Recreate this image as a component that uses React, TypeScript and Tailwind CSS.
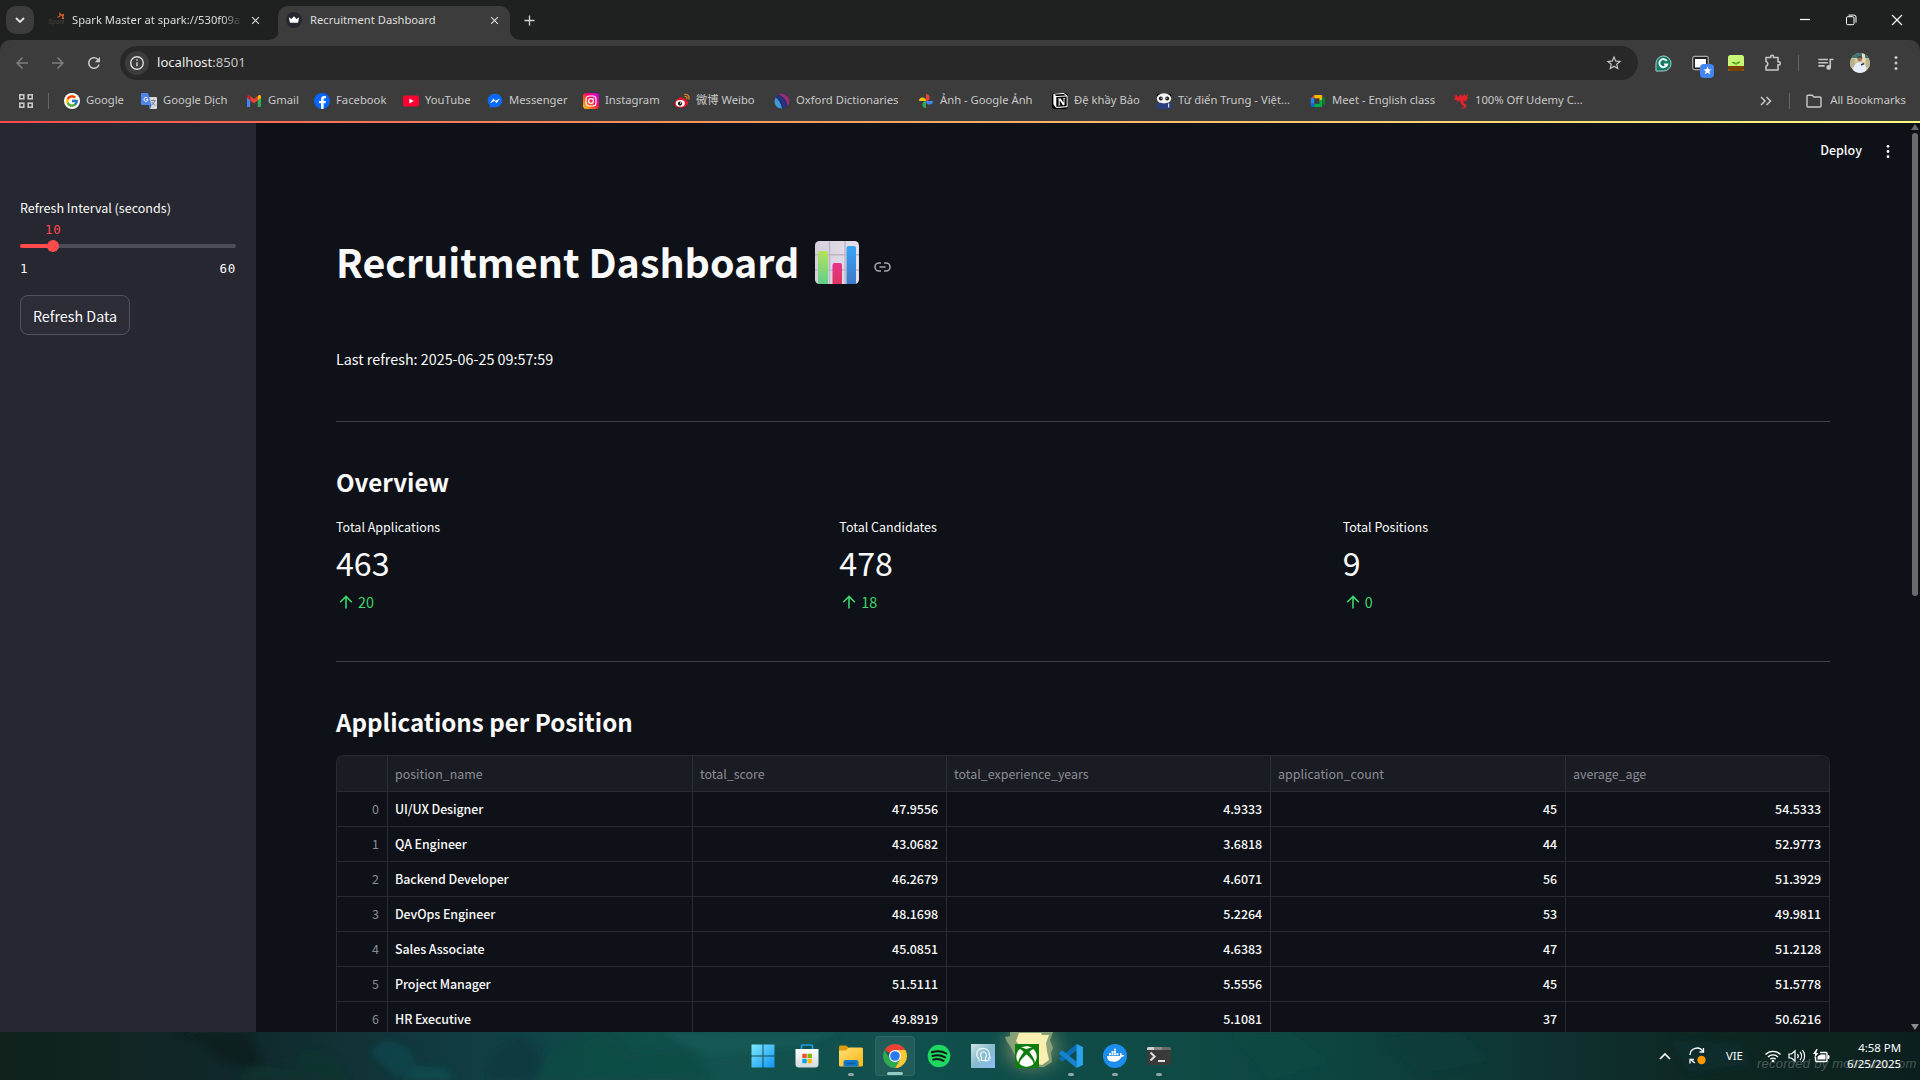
import type { ReactNode } from "react";
import { FcGoogle } from "react-icons/fc";
import { FaXbox, FaFacebookF } from "react-icons/fa";
import { RiNotionFill } from "react-icons/ri";
import { MdArrowBack, MdArrowForward, MdRefresh, MdStarBorder, MdQueueMusic, MdClose } from "react-icons/md";

/* ---------- small brand icons ---------- */

const Translate = () => (
  <svg viewBox="0 0 16 16" className="size-4">
    <path d="M6 4h9a1 1 0 0 1 1 1v10a1 1 0 0 1-1 1H9z" fill="#d5d7da" />
    <path d="M0 1a1 1 0 0 1 1-1h6l3.6 12H1a1 1 0 0 1-1-1z" fill="#4f86ec" />
    <path d="M7.500 12h3.100L9 16z" fill="#3367d6" />
    <path d="M6.600 5.200A2 2 0 1 0 7 6.600H5.200" fill="none" stroke="#fff" strokeWidth="1" />
    <path d="M10 7.500h4.600M12.300 6.500v1M13.700 7.600c-.3 2-1.400 3.300-2.900 4.300M11 9c.5 1.300 1.700 2.500 3.300 3.300" fill="none" stroke="#6b7077" strokeWidth=".8" />
  </svg>
);

const Gmail = () => (
  <svg viewBox="0 0 16 16" className="size-4">
    <path d="M1 13.500V4.200l3.200 2.400v7.400H1.500a.5.5 0 0 1-.5-.5z" fill="#4285f4" />
    <path d="M11.800 14V6.600L15 4.200v9.300a.5.5 0 0 1-.5.5z" fill="#34a853" />
    <path d="M4.200 7.400V3L8 5.900 11.800 3v4.400L8 10.300z" fill="#ea4335" />
    <path d="M11.800 3l.8-.6c1-.7 2.400 0 2.400 1.200v1.200l-3.200 2.500z" fill="#fbbc04" />
    <path d="M4.200 3l-.8-.6C2.400 1.700 1 2.400 1 3.600v1.200l3.200 2.500z" fill="#c5221f" />
  </svg>
);

const Facebook = () => (
  <span className="flex size-4 items-end justify-center overflow-hidden rounded-full bg-[#0866ff]">
    <FaFacebookF className="size-[13px] text-white" />
  </span>
);

const YouTube = () => (
  <svg viewBox="0 0 16 16" className="size-4">
    <rect x="0" y="2.500" width="16" height="11" rx="2.600" fill="#ff0033" />
    <path d="M6.400 5.600v4.800L10.600 8z" fill="#fff" />
  </svg>
);

const Messenger = () => (
  <svg viewBox="0 0 16 16" className="size-4">
    <path d="M8 .8C3.900.8.8 3.700.8 7.600c0 2.100.9 3.900 2.300 5.100V15l2.200-1.100c.9.200 1.700.4 2.700.4 4.100 0 7.200-2.900 7.200-6.700S12.100.8 8 .8z" fill="#0a6cff" />
    <path d="M3.700 9.700L6.300 6l2.400 2 3.500-1.900L9.700 9.700l-2.400-2z" fill="#fff" stroke="#fff" strokeWidth=".5" />
  </svg>
);

const Instagram = () => (
  <svg viewBox="0 0 16 16" className="size-4">
    <defs>
      <linearGradient id="ig" x1="0" y1="1" x2="1" y2="0">
        <stop offset="0" stopColor="#ffd521" />
        <stop offset=".35" stopColor="#ff5a1f" />
        <stop offset=".6" stopColor="#ff0069" />
        <stop offset="1" stopColor="#b900ff" />
      </linearGradient>
    </defs>
    <rect width="16" height="16" rx="3.500" fill="url(#ig)" />
    <rect x="3" y="3" width="10" height="10" rx="3" fill="none" stroke="#fff" strokeWidth="1.200" />
    <circle cx="8" cy="8" r="2.400" fill="none" stroke="#fff" strokeWidth="1.200" />
    <circle cx="10.900" cy="5.100" r=".7" fill="#fff" />
  </svg>
);

const Weibo = () => (
  <svg viewBox="0 0 16 16" className="size-4">
    <path d="M6.500 4.200c1.300-.5 2.200.1 1.900 1.500 2-.8 3.600-.3 3.100 1.400 3.500 1 3.300 4.200.3 6.100-3.300 2.100-9 2.200-11-.9C-.6 9.800 3 5.400 6.500 4.200z" fill="#e6162d" />
    <ellipse cx="6.300" cy="10.400" rx="4.500" ry="3.300" fill="#fff" />
    <circle cx="6" cy="10.600" r="2.100" fill="#111" />
    <circle cx="6.600" cy="10" r=".7" fill="#fff" />
    <path d="M10.800 1.300c2.700-.4 4.900 1.900 4.100 4.900M11 3.500c1.400-.2 2.300.8 1.900 2.200" fill="none" stroke="#e88a1c" strokeWidth="1.200" strokeLinecap="round" />
  </svg>
);

const Oxford = () => (
  <svg viewBox="0 0 16 16" className="size-4">
    <circle cx="8" cy="8" r="7.500" fill="#1f2f70" />
    <path d="M4 1.600C9-1 15.500 3 15.500 8c0 2-1 4-2.200 5C13 8 10 3.500 4 1.600z" fill="#9a2c72" />
    <path d="M1.500 4.500C4 6 7 10 8 15.500 3 15.500.5 12 .5 8z" fill="#3f9ad6" />
    <path d="M2.300 3.400C6.500 6 9 10.500 9.500 15.300l2.500-1.100C11.500 9 8 4 4 1.700z" fill="#2b3480" />
  </svg>
);

const Photos = () => (
  <svg viewBox="0 0 16 16" className="size-4">
    <path d="M8 8H1a3.500 3.500 0 0 1 7 0z" fill="#fbbc04" />
    <path d="M8 8V1a3.500 3.500 0 0 1 0 7z" fill="#ea4335" />
    <path d="M8 8h7a3.500 3.500 0 0 1-7 0z" fill="#4285f4" />
    <path d="M8 8v7a3.500 3.500 0 0 1 0-7z" fill="#34a853" />
  </svg>
);

const Notion = () => (
  <span className="flex size-4 items-center justify-center rounded-[3px] bg-black">
    <RiNotionFill className="size-[19px] shrink-0 text-white" />
  </span>
);

const Panda = () => (
  <svg viewBox="0 0 16 16" className="size-4">
    <circle cx="2.600" cy="2.400" r="2" fill="#111" />
    <circle cx="13.400" cy="2.400" r="2" fill="#111" />
    <ellipse cx="8" cy="5.500" rx="7.200" ry="5.200" fill="#f3f3f3" />
    <ellipse cx="4.800" cy="5.500" rx="1.900" ry="2.100" fill="#111" />
    <ellipse cx="11.200" cy="5.500" rx="1.900" ry="2.100" fill="#111" />
    <circle cx="5.200" cy="5.200" r=".6" fill="#fff" />
    <circle cx="10.800" cy="5.200" r=".6" fill="#fff" />
    <path d="M.5 10.500c2-1 4-.8 7.500.3 3.500-1.100 5.500-1.300 7.500-.3V16H.5z" fill="#27407c" />
    <path d="M12.600 10.500v4" stroke="#cdd6ee" strokeWidth="1.200" />
  </svg>
);

const Meet = () => (
  <svg viewBox="0 0 16 16" className="size-4">
    <path d="M.8 5.200L4.300 2v3.300z" fill="#ea4335" />
    <path d="M4.300 2h6.900a1 1 0 0 1 1 1v3.500L9.500 8V5.300H4.300z" fill="#ffba00" />
    <path d="M.8 5.200h3.500v5.500H.8z" fill="#2684fc" />
    <path d="M.8 10.700h3.500V14H2a1.200 1.200 0 0 1-1.200-1.200z" fill="#0066da" />
    <path d="M4.300 10.700h5.200V8l2.700-1.500V13a1 1 0 0 1-1 1H4.300z" fill="#00ac47" />
    <path d="M12.200 5.800L15 3.500v9l-2.800-2.300z" fill="#00832d" />
  </svg>
);

const Dragon = () => (
  <svg viewBox="0 0 16 16" className="size-4">
    <path d="M.3 1.500L3 4l-.5-3 3 3.200L8 1l1 2.500L12.500.4l-.8 2.800L15.500 1l-1.700 3.500 1.900.5-2.500 1.500.6 2-3-.9c-1 1.500-.3 2.400 1.200 3.100 2 1 1.700 3.500-.7 4.600-1.700.7-3.500.5-4-.5 1.800.4 3.700-.3 3.600-1.500-.1-1-2.400-1-3.200-2.800-.6-1.400.3-2.300-.6-3L4 8.800l.2-2L1 7l1.500-1.700z" fill="#e8202a" />
  </svg>
);

const bookmarks: { label: string; icon: ReactNode; width: string }[] = [
  { label: "Google", icon: <FcGoogle className="size-4 rounded-full bg-white p-px" />, width: "w-[77px]" },
  { label: "Google Dịch", icon: <Translate />, width: "w-[105px]" },
  { label: "Gmail", icon: <Gmail />, width: "w-[68px]" },
  { label: "Facebook", icon: <Facebook />, width: "w-[89px]" },
  { label: "YouTube", icon: <YouTube />, width: "w-[84px]" },
  { label: "Messenger", icon: <Messenger />, width: "w-[96px]" },
  { label: "Instagram", icon: <Instagram />, width: "w-[91px]" },
  { label: "微博 Weibo", icon: <Weibo />, width: "w-[100px]" },
  { label: "Oxford Dictionaries", icon: <Oxford />, width: "w-[144px]" },
  { label: "Ảnh - Google Ảnh", icon: <Photos />, width: "w-[134px]" },
  { label: "Đệ khầy Bảo", icon: <Notion />, width: "w-[104px]" },
  { label: "Từ điển Trung - Việt...", icon: <Panda />, width: "w-[154px]" },
  { label: "Meet - English class", icon: <Meet />, width: "w-[143px]" },
  { label: "100% Off Udemy C...", icon: <Dragon />, width: "w-[140px]" },
];

/* ---------- browser chrome ---------- */

const Dots = ({ className }: { className: string }) => (
  <svg viewBox="0 0 4 16" className={className} fill="currentColor">
    <circle cx="2" cy="2.500" r="1.500" />
    <circle cx="2" cy="8" r="1.500" />
    <circle cx="2" cy="13.500" r="1.500" />
  </svg>
);

function TabStrip() {
  return (
    <div className="flex h-10 items-end bg-[#1f2120] text-[11.200px] text-[#dededc]">
      <div className="mb-1.5 ml-1.5 flex size-7 items-center justify-center rounded-[10px] bg-[#3c3c3c]">
        <svg viewBox="0 0 10 6" className="h-1.5 w-2.5" fill="none" stroke="#e3e3e3" strokeWidth="1.800"><path d="M1 1l4 4 4-4" /></svg>
      </div>
      <div className="ml-[14px] flex h-[34px] w-[221px] items-center pb-[6px]">
        <svg viewBox="0 0 16 16" className="size-4">
          <text x="0" y="12" fontSize="6.500" fontStyle="italic" fill="#45403d" fontFamily="Liberation Sans">Spark</text>
          <path d="M9.500 5.200l2.300-1L12 1.500l1.500 1.800 2.200-.8-1 2.100 1 2-2.200-.6" fill="none" stroke="#d9662a" strokeWidth="1.200" />
        </svg>
        <span className="ml-2 w-[170px] overflow-hidden whitespace-nowrap [mask-image:linear-gradient(to_right,black_88%,transparent)]">Spark Master at spark://530f09a</span>
        <MdClose className="ml-[7px] size-[13px]" />
      </div>
      <div className="size-2.5 overflow-hidden bg-[#3c3c3c]"><div className="size-full rounded-br-[10px] bg-[#1f2120]" /></div>
      <div className="-ml-px flex h-[34px] w-[232px] items-center rounded-t-[10px] bg-[#3c3c3c] pb-[6px] pl-2">
        <svg viewBox="0 0 16 16" className="size-4">
          <circle cx="8" cy="8" r="8" fill="#262730" />
          <path d="M2.800 5.200l2.700 1.700L8 4.200l2.500 2.700 2.700-1.700-1.200 5.500H4z" fill="#fff" />
        </svg>
        <span className="ml-2 w-[177px] whitespace-nowrap">Recruitment Dashboard</span>
        <MdClose className="ml-[1px] size-[13px]" />
      </div>
      <div className="size-2.5 overflow-hidden bg-[#3c3c3c]"><div className="size-full rounded-bl-[10px] bg-[#1f2120]" /></div>
      <svg viewBox="0 0 12 12" className="mb-[14px] ml-[4px] size-[11px]" stroke="#cfcfcf" strokeWidth="1.500"><path d="M6 .5v11M.5 6h11" /></svg>
      <div className="mr-[17px] mb-[14px] ml-auto flex items-center text-white">
        <svg viewBox="0 0 12 12" className="mr-[34px] size-3" stroke="currentColor" strokeWidth="1.200"><path d="M1 5.500h10" /></svg>
        <svg viewBox="0 0 12 12" className="mr-[34px] size-3" stroke="currentColor" fill="none"><rect x="1.500" y="2.700" width="7.500" height="8" rx="1.200" /><path d="M3.500 1.100h5.500a2 2 0 0 1 2 2v5.500" /></svg>
        <svg viewBox="0 0 12 12" className="size-3" stroke="currentColor" strokeWidth="1.100"><path d="M1 1l10 10M11 1L1 11" /></svg>
      </div>
    </div>
  );
}

function Toolbar() {
  return (
    <div className="bg-[#1f2120]">
      <div className="flex h-[46px] items-center rounded-t-[10px] bg-[#3c3c3c] pl-[13px] text-[#c7c7c7]">
        <MdArrowBack className="size-[18px] text-[#7e7e7e]" />
        <MdArrowForward className="ml-[18px] size-[18px] text-[#7e7e7e]" />
        <MdRefresh className="ml-[18px] size-[18px]" />
        <div className="ml-[17px] flex h-[34px] w-[1518px] items-center rounded-full bg-[#282828] pl-[5px]">
          <span className="flex size-6 items-center justify-center rounded-full bg-[#3c3c3c]">
            <svg viewBox="0 0 16 16" className="size-4" fill="none" stroke="#dcdcdc" strokeWidth="1.400"><circle cx="8" cy="8" r="6.300" /><path d="M8 7.200v4M8 4.300v1.500" /></svg>
          </span>
          <span className="ml-2 text-[13.100px] text-[#c3c3c3]"><span className="text-[#ececec]">localhost</span>:8501</span>
          <MdStarBorder className="mr-[15px] ml-auto size-[18px]" />
        </div>
        <svg viewBox="0 0 18 18" className="ml-[17px] size-[17px]">
          <path d="M9 1a8 8 0 1 1 0 16H1V9a8 8 0 0 1 8-8z" fill="#0f7c68" stroke="#b9d3cd" />
          <path d="M12.500 6.200A4.300 4.300 0 1 0 13 10H9.600" fill="none" stroke="#fff" strokeWidth="2" />
        </svg>
        <div className="relative ml-5 size-[17px]">
          <svg viewBox="0 0 17 17" className="size-full"><rect x=".7" y="1.300" width="15.600" height="13.400" rx="2" fill="#222" stroke="#a8a8a8" strokeWidth="1.200" /><rect x="3" y="4" width="11" height="8.500" fill="#fff" /></svg>
          <span className="absolute top-[9px] left-[8px] flex size-[14px] items-center justify-center rounded-[4px] bg-[#4285f4]">
            <svg viewBox="0 0 10 10" className="size-[9px]" fill="#fff"><path d="M5 .5l1.300 3 3.200.3-2.400 2.100.7 3.200L5 7.400 2.200 9.100l.7-3.200L.5 3.800l3.200-.3z" /></svg>
          </span>
        </div>
        <svg viewBox="0 0 16 16" className="ml-[19px] size-4">
          <rect width="16" height="16" rx="2.500" fill="#c9f776" />
          <path d="M0 11h16v2.500a2.500 2.500 0 0 1-2.500 2.500h-11A2.500 2.500 0 0 1 0 13.500z" fill="#7b4208" />
          <path d="M8 11V8.800C6.500 9.200 4.800 8.800 4 7c2 0 3.300.3 4 1.500C8.700 7 10.200 6.600 12 6.700 11.500 8.500 10 9 8.300 8.800" fill="#58a713" stroke="#4f9c12" strokeWidth=".4" />
        </svg>
        <svg viewBox="0 0 18 18" className="ml-5 size-[18px]" fill="none" stroke="currentColor" strokeWidth="1.600" strokeLinejoin="round">
          <path d="M2 3.500h4.700V2.600a1.400 1.400 0 0 1 2.800 0v.9H14v4.400h.8a1.500 1.500 0 0 1 0 3H14V16H2v-3.800a2.500 2.500 0 0 0 0-4.800z" />
        </svg>
        <span className="ml-4 h-4 w-px bg-[#666]" />
        <MdQueueMusic className="ml-[17px] size-[19px]" />
        <svg viewBox="0 0 20 20" className="ml-[15px] size-5">
          <defs><clipPath id="av"><circle cx="10" cy="10" r="10" /></clipPath></defs>
          <g clipPath="url(#av)">
            <rect width="20" height="20" fill="#d9c9a0" />
            <path d="M0 0h20v5H0z" fill="#3f7474" />
            <path d="M12 0h3v9h-3z" fill="#e6dcc0" />
            <path d="M0 6h5v8H0zM16 5h4v9h-4z" fill="#b9b28f" />
            <path d="M4 20c-2-6 1-10.500 6-10.500s7 4.500 6 10.500z" fill="#e9eefc" />
            <circle cx="9.800" cy="6" r="2.400" fill="#9a7660" />
            <path d="M7.300 5.500c0-3.500 5-3.500 5.200 0-1.500-1.500-3.500-1.500-5.200 0z" fill="#4a3b33" />
            <path d="M11 12l3-1.500" stroke="#2f3a3f" strokeWidth="1.500" />
          </g>
        </svg>
        <Dots className="ml-6 h-4 w-1" />
      </div>
      <div className="flex h-[35px] items-center bg-[#3c3c3c] pb-[6px] pl-[19px] text-[11.250px] text-[#c9c9c9]">
        <svg viewBox="0 0 14 14" className="size-[14px]" fill="none" stroke="#c7c7c7" strokeWidth="1.600"><rect x=".8" y=".8" width="4" height="4" /><rect x="9.200" y=".8" width="4" height="4" /><rect x=".8" y="9.200" width="4" height="4" /><rect x="9.200" y="9.200" width="4" height="4" /></svg>
        <span className="mr-[15px] ml-[15px] h-4 w-px bg-[#666]" />
        {bookmarks.map((b) => (
          <span key={b.label} className={`flex shrink-0 items-center gap-1.5 whitespace-nowrap ${b.width}`}>
            <span className="size-4 shrink-0">{b.icon}</span>
            <span>{b.label}</span>
          </span>
        ))}
        <svg viewBox="0 0 12 10" className="ml-auto h-2.5 w-3" fill="none" stroke="currentColor" strokeWidth="1.500"><path d="M1 1l4 4-4 4M6.500 1l4 4-4 4" /></svg>
        <span className="ml-[17px] h-4 w-px bg-[#666]" />
        <svg viewBox="0 0 16 14" className="ml-4 h-[14px] w-4" fill="none" stroke="currentColor" strokeWidth="1.400"><path d="M1 2.500V12a1 1 0 0 0 1 1h12a1 1 0 0 0 1-1V4a1 1 0 0 0-1-1H8L6.200 1.200H2a1 1 0 0 0-1 1z" /></svg>
        <span className="mr-[14px] ml-2 whitespace-nowrap">All Bookmarks</span>
      </div>
      <div className="h-0.5 bg-gradient-to-r from-[#ff4b4b] to-[#fffd80]" />
    </div>
  );
}

/* ---------- dashboard ---------- */

function Sidebar() {
  return (
    <aside className="w-64 shrink-0 bg-[#262730] px-5 pt-[75px] text-[#fafafa]">
      <div className="h-5 text-[12.550px] leading-5 whitespace-nowrap">Refresh Interval (seconds)</div>
      <div className="mt-1 h-4 pl-[25px] font-['DejaVu_Sans_Mono',monospace] text-[12.500px] leading-4 tracking-[0.700px] text-[#ff4b4b]">10</div>
      <div className="relative mt-[6px] h-1 rounded-full bg-[linear-gradient(to_right,#ff4b4b_15.200%,#4c4d57_15.200%)]">
        <span className="absolute top-[-4px] left-[27px] size-3 rounded-full bg-[#ff4b4b]" />
      </div>
      <div className="mt-[13px] flex h-4 justify-between font-['DejaVu_Sans_Mono',monospace] text-[12.500px] leading-4 tracking-[0.700px]"><span>1</span><span>60</span></div>
      <button className="mt-[18px] flex h-10 w-[110px] items-center justify-center rounded-lg border border-[#51525b] bg-[#2b2c36] pt-px text-[14.300px] whitespace-nowrap">Refresh Data</button>
    </aside>
  );
}

const metrics = [
  { label: "Total Applications", value: "463", delta: "20" },
  { label: "Total Candidates", value: "478", delta: "18" },
  { label: "Total Positions", value: "9", delta: "0" },
];

const columns = ["", "position_name", "total_score", "total_experience_years", "application_count", "average_age"];

const rows = [
  ["0", "UI/UX Designer", "47.9556", "4.9333", "45", "54.5333"],
  ["1", "QA Engineer", "43.0682", "3.6818", "44", "52.9773"],
  ["2", "Backend Developer", "46.2679", "4.6071", "56", "51.3929"],
  ["3", "DevOps Engineer", "48.1698", "5.2264", "53", "49.9811"],
  ["4", "Sales Associate", "45.0851", "4.6383", "47", "51.2128"],
  ["5", "Project Manager", "51.5111", "5.5556", "45", "51.5778"],
  ["6", "HR Executive", "49.8919", "5.1081", "37", "50.6216"],
];

const cellStyle = (col: number) =>
  col === 0
    ? "justify-end text-[#8b8d94]"
    : col === 1
      ? "justify-start font-medium tracking-[-0.080px] text-[#fafafa]"
      : "justify-end font-medium tracking-[-0.050px] text-[#fafafa]";

function ChartEmoji() {
  return (
    <svg viewBox="0 0 44 43" className="mt-[3px] ml-[16px] h-[43px] w-[44px]">
      <defs>
        <linearGradient id="g1" x1="0" y1="0" x2="0" y2="1"><stop offset="0" stopColor="#b5e35c" /><stop offset="1" stopColor="#5fcf8b" /></linearGradient>
        <linearGradient id="g2" x1="0" y1="0" x2="0" y2="1"><stop offset="0" stopColor="#e8338c" /><stop offset="1" stopColor="#dd3560" /></linearGradient>
        <linearGradient id="g3" x1="0" y1="0" x2="0" y2="1"><stop offset="0" stopColor="#37a5f5" /><stop offset="1" stopColor="#3f78c9" /></linearGradient>
        <linearGradient id="g4" x1="0" y1="0" x2="1" y2="0"><stop offset="0" stopColor="#d5cfdc" /><stop offset="1" stopColor="#e5e0ea" /></linearGradient>
      </defs>
      <rect width="44" height="43" rx="4.500" fill="url(#g4)" />
      <path d="M14.500 0v43M30 0v43M0 13.700h44M0 29h44" stroke="#bdb6c6" strokeWidth="1.400" />
      <path d="M3 43V12a2 2 0 0 1 2-2h6a2 2 0 0 1 2 2v31z" fill="url(#g1)" />
      <path d="M17.500 43V24a2 2 0 0 1 2-2H25a2 2 0 0 1 2 2v19z" fill="url(#g2)" />
      <path d="M31.500 43V7a2 2 0 0 1 2-2H39a2 2 0 0 1 2 2v36z" fill="url(#g3)" />
    </svg>
  );
}

function Main() {
  return (
    <main className="flex min-w-0 flex-1 bg-[#0e1117] text-[#fafafa]">
      <div className="min-w-0 flex-1">
        <header className="flex h-14 items-center justify-end text-[12.500px] font-medium">
          <span className="-mt-0.5">Deploy</span>
          <Dots className="mr-[19px] ml-6 h-[15px] w-1" />
        </header>
        <div className="ml-20 w-[1494px]">
          <h1 className="mt-[50px] flex h-16 items-center text-[39.400px] leading-none font-bold whitespace-nowrap">
            <span>Recruitment Dashboard</span>
            <ChartEmoji />
            <svg viewBox="0 0 17 10" className="mt-[12px] ml-[15px] h-2.5 w-[17px]" fill="none" stroke="#a3a5aa" strokeWidth="1.600"><path d="M7 1H5a4 4 0 0 0 0 8h2M10 1h2a4 4 0 0 1 0 8h-2M5.500 5h6" /></svg>
          </h1>
          <p className="mt-[54px] h-6 text-[14.330px] leading-6">Last refresh: 2025-06-25 09:57:59</p>
          <hr className="mt-[50px] border-[#3e4045]" />
          <h2 className="mt-[43px] h-[34px] text-[24.150px] leading-[34px] font-bold">Overview</h2>
          <div className="mt-[18px] grid grid-cols-3 gap-4">
            {metrics.map((m) => (
              <div key={m.label}>
                <div className="h-5 text-[12.530px] leading-5">{m.label}</div>
                <div className="mt-0.5 h-[46px] text-[32.200px] leading-[46px]">{m.value}</div>
                <div className="mt-[5px] flex h-6 items-center pl-[3px] text-[14.300px] text-[#3dd56d]">
                  <svg viewBox="0 0 14 14" className="mr-[5px] size-[14px]" fill="none" stroke="currentColor" strokeWidth="1.600"><path d="M7 13.500V1.500M1.200 7.300L7 1.500l5.800 5.800" /></svg>
                  {m.delta}
                </div>
              </div>
            ))}
          </div>
          <hr className="mt-[47px] border-[#3e4045]" />
          <h2 className="mt-[43px] h-[34px] text-[24.150px] leading-[34px] font-bold">Applications per Position</h2>
          <div className="mt-4 overflow-hidden rounded-t-lg border border-b-0 border-[#282b31] text-[12.450px]">
            <div className="grid h-9 grid-cols-[51px_305px_254px_324px_295px_1fr] border-b border-[#282b31] bg-[#1a1c24] text-[#8b8d94]">
              {columns.map((c) => (
                <div key={c} className="flex items-center border-r border-[#2c2f36] pt-px pr-2 pl-[7px] last:border-r-0">{c}</div>
              ))}
            </div>
            {rows.map((r) => (
              <div key={r[0]} className="grid h-[35px] grid-cols-[51px_305px_254px_324px_295px_1fr] border-b border-[#282b31]">
                {r.map((v, c) => (
                  <div key={c} className={`flex items-center border-r border-[#282b31] pr-2 pl-[7px] last:border-r-0 ${cellStyle(c)}`}>{v}</div>
                ))}
              </div>
            ))}
          </div>
        </div>
      </div>
      <div className="flex w-[11px] flex-col items-center pt-[1px] pb-[2px]">
        <svg viewBox="0 0 8 6" className="h-1.5 w-2" fill="#6b6b6b"><path d="M4 0l4 6H0z" /></svg>
        <div className="mt-[3px] h-[463px] w-1.5 rounded-full bg-[#6b6b6b]" />
        <svg viewBox="0 0 8 6" className="mt-auto h-1.5 w-2" fill="#8b8b8b"><path d="M0 0h8L4 6z" /></svg>
      </div>
    </main>
  );
}

/* ---------- taskbar ---------- */

const WindowsLogo = () => (
  <svg viewBox="0 0 24 24" className="size-6">
    <defs><linearGradient id="win" x1="0" y1="0" x2="1" y2="1"><stop offset="0" stopColor="#7fe9ff" /><stop offset="1" stopColor="#1094f5" /></linearGradient></defs>
    <path d="M.5.5H11.500v11H.5zM12.500.5h11v11h-11zM.5 12.500h11v11H.5zM12.500 12.500h11v11h-11z" fill="url(#win)" />
  </svg>
);

const Store = () => (
  <svg viewBox="0 0 24 24" className="size-6">
    <defs><linearGradient id="st" x1="0" y1="0" x2="0" y2="1"><stop offset="0" stopColor="#fff" /><stop offset="1" stopColor="#d3d8da" /></linearGradient></defs>
    <path d="M6.500 5.500V2a1 1 0 0 1 1-1h9a1 1 0 0 1 1 1v3.500" fill="none" stroke="#1b9de2" strokeWidth="1.700" />
    <path d="M.5 5h23v15a3.500 3.500 0 0 1-3.500 3.500H4A3.500 3.500 0 0 1 .5 20z" fill="url(#st)" />
    <path d="M7.300 9.800h4.400v4.300H7.300z" fill="#f25022" /><path d="M12.500 9.800h4.400v4.300h-4.400z" fill="#7fba00" /><path d="M7.300 14.900h4.400v4.300H7.300z" fill="#00a4ef" /><path d="M12.500 14.900h4.400v4.300h-4.400z" fill="#ffb900" />
  </svg>
);

const Explorer = () => (
  <svg viewBox="0 0 24 24" className="size-6">
    <defs><linearGradient id="fo" x1="0" y1="0" x2="1" y2="1"><stop offset="0" stopColor="#ffdf78" /><stop offset="1" stopColor="#fbb812" /></linearGradient></defs>
    <path d="M0 3a1.500 1.500 0 0 1 1.500-1.500h5.800L10 4H22.500A1.500 1.500 0 0 1 24 5.500V9H0z" fill="#d99a0b" />
    <path d="M0 6.500h6.800L10 3.500h12.500A1.500 1.500 0 0 1 24 5v16a1.500 1.500 0 0 1-1.500 1.500h-21A1.500 1.500 0 0 1 0 21z" fill="url(#fo)" />
    <path d="M4.500 22.500V18a2 2 0 0 1 2-2h11a2 2 0 0 1 2 2v4.500z" fill="#1278c8" />
    <path d="M8 19.500h8" stroke="#0b5a9e" strokeWidth="1.500" strokeLinecap="round" />
  </svg>
);

const Chrome = () => (
  <svg viewBox="0 0 24 24" className="size-6">
    <path d="M12 12L1.610 6A12 12 0 0 1 22.390 6z" fill="#ea4335" />
    <path d="M22.390 6A12 12 0 0 1 12 24l5.200-9L12 6z" fill="#fcc934" />
    <path d="M1.610 6L6.800 15 17.200 15 12 24A12 12 0 0 1 1.610 6z" fill="#2da94f" />
    <circle cx="12" cy="12" r="6" fill="#fff" />
    <circle cx="12" cy="12" r="4.800" fill="#2a7bf0" />
  </svg>
);

const Spotify = () => (
  <svg viewBox="0 0 24 24" className="size-6">
    <circle cx="12" cy="12" r="11.300" fill="#1ed760" />
    <path d="M4.800 8.200c4.800-1.500 10.500-1 14.600 1.300M5.500 12c4.300-1.200 8.800-.7 12.600 1.400M6.200 15.600c3.600-1 7.200-.6 10.300 1.200" fill="none" stroke="#101715" strokeWidth="2" strokeLinecap="round" />
  </svg>
);

const HeadApp = () => (
  <svg viewBox="0 0 24 24" className="size-6">
    <defs><linearGradient id="hd" x1="0" y1="0" x2="1" y2="1"><stop offset="0" stopColor="#cfe3e4" /><stop offset=".5" stopColor="#86bccd" /><stop offset="1" stopColor="#8dbcf5" /></linearGradient></defs>
    <rect width="24" height="24" fill="url(#hd)" />
    <path d="M8 17.500v-2.500C3.500 10 6.500 4.300 12 4.300c4.800 0 7 3.700 6.300 7.200l1 2.500h-1.500v2.500h-3v1.500" fill="none" stroke="#eef7fa" strokeWidth="1.200" />
    <path d="M10.500 16.500v-3c-2-2.500-.5-5.500 2-5.500s4 3 2 5.500v3z" fill="none" stroke="#eef7fa" strokeWidth="1.200" />
  </svg>
);

const Xbox = () => (
  <span className="flex size-6 items-center justify-center bg-[#107c10]"><FaXbox className="size-[21px] text-white" /></span>
);

const VSCode = () => (
  <svg viewBox="0 0 24 24" className="size-6">
    <path d="M17.500 0v6.500L3 17.800l-2.600-2.300a1 1 0 0 1 0-1.500z" fill="#0b6cb5" />
    <path d="M17.500 24v-6.500L3 6.200.4 8.500a1 1 0 0 0 0 1.500z" fill="#1484d0" />
    <path d="M17.500 0L24 3v18l-6.500 3z" fill="#29a3ee" />
  </svg>
);

const Docker = () => (
  <svg viewBox="0 0 24 24" className="size-6">
    <circle cx="12" cy="12" r="12" fill="#1d8df0" />
    <path d="M4 12h13c.4-.9.3-1.800-.2-2.700l.8-.6c.9.700 1.300 1.500 1.400 2.300.8-.2 1.600-.1 2.300.3-.5 1.200-1.500 1.700-2.900 1.700-1.400 3.200-4 4.700-8 4.700-4 0-6.300-1.900-6.400-5.700z" fill="#fff" />
    <path d="M6 9.300h2v2H6zM8.500 9.300h2v2h-2zM11 9.300h2v2h-2zM13.500 9.300h2v2h-2zM8.500 6.900h2v2h-2zM11 6.900h2v2h-2zM11 4.800h2v1.700h-2z" fill="#fff" />
  </svg>
);

const Terminal = () => (
  <svg viewBox="0 0 24 24" className="size-6">
    <rect y="3" width="24" height="18" rx="1.500" fill="#3a3a3a" />
    <path d="M0 4.500A1.500 1.500 0 0 1 1.500 3H7v3H0z" fill="#d0d0d0" /><path d="M7 3h8v3H7z" fill="#8b8b8b" /><path d="M15 3h7.500A1.500 1.500 0 0 1 24 4.500V6h-9z" fill="#6a6a6a" />
    <path d="M3.500 8.500l4 4-4 4" fill="none" stroke="#ddd" strokeWidth="2.200" /><path d="M11 17h7" stroke="#fff" strokeWidth="1.700" />
  </svg>
);

const apps: { name: string; icon: ReactNode; state?: "open" | "active" }[] = [
  { name: "start", icon: <WindowsLogo /> },
  { name: "store", icon: <Store /> },
  { name: "explorer", icon: <Explorer />, state: "open" },
  { name: "chrome", icon: <Chrome />, state: "active" },
  { name: "spotify", icon: <Spotify /> },
  { name: "head", icon: <HeadApp /> },
  { name: "xbox", icon: <Xbox /> },
  { name: "vscode", icon: <VSCode />, state: "open" },
  { name: "docker", icon: <Docker />, state: "open" },
  { name: "terminal", icon: <Terminal />, state: "open" },
];

/* Painted desktop wallpaper that shows through the translucent bar. */
const Wallpaper = () => (
  <svg viewBox="0 0 1920 48" preserveAspectRatio="none" className="absolute inset-0 size-full">
    <defs>
      <linearGradient id="wp" x1="0" y1="0" x2="1" y2="0">
        <stop offset="0" stopColor="#10211c" /><stop offset=".12" stopColor="#10282a" /><stop offset=".2" stopColor="#11353a" /><stop offset=".28" stopColor="#104447" /><stop offset=".31" stopColor="#0f4c47" /><stop offset=".38" stopColor="#13524f" /><stop offset=".48" stopColor="#0f4f4c" /><stop offset=".62" stopColor="#0f4a45" /><stop offset=".7" stopColor="#0d4440" /><stop offset=".8" stopColor="#0e3331" /><stop offset=".88" stopColor="#0e2824" /><stop offset="1" stopColor="#0b201e" />
      </linearGradient>
      <filter id="soft" x="-20%" y="-60%" width="140%" height="220%"><feGaussianBlur stdDeviation="3" /></filter>
      <filter id="glow" x="-100%" y="-100%" width="300%" height="300%"><feGaussianBlur stdDeviation="9" /></filter>
    </defs>
    <rect width="1920" height="48" fill="url(#wp)" />
    <g filter="url(#soft)" opacity=".75">
      <path d="M175 0h75l15 40-40-10-25-20z" fill="#0f1f1b" />
      <path d="M235 48l20-14 40 4 10-22 25 6 20 26z" fill="#10362f" />
      <path d="M370 20l15-12 25 8 5 18-18 12z" fill="#114650" />
      <path d="M400 48l15-14 30 2 10 12z" fill="#0e5052" />
      <path d="M485 48l10-30 25-14 20 14 5 30z" fill="#0f393c" />
      <path d="M535 48l15-28 60-18 20 22 60-8 20 32z" fill="#0e4c44" />
      <path d="M660 0h180l-40 16-90 8z" fill="#155a57" />
      <path d="M1230 0h60l40 30-60 18z" fill="#0d4a43" />
      <path d="M1380 6l80-6 30 28-70 14z" fill="#0c3c3b" />
      <path d="M1670 8l70 4 10 20-60 8z" fill="#0d2d2f" />
    </g>
    <ellipse cx="1032" cy="16" rx="26" ry="20" fill="#c6c178" opacity=".5" filter="url(#glow)" />
    <path d="M1010 0h43l-3 8 3 8-2 5 1 9-8 5-14 0-13-8-7-13-3-4-2-5 5-1z" fill="#9fb083" opacity=".75" />
    <path d="M1019 1h22l1 2 7 0-3 8 1 8 2 9-7 5-8-2-10-12-8-10z" fill="#f8efb0" />
  </svg>
);

function Taskbar() {
  return (
    <footer className="relative h-12 overflow-hidden bg-[#103433]">
      <Wallpaper />
      <div className="relative flex h-full items-center">
        <div className="flex flex-1 justify-center pr-[2px] pl-[4px]">
          <div className="ml-[280px] flex gap-[4px]">
            {apps.map((a) => (
              <div key={a.name} className={`relative flex size-10 items-center justify-center rounded ${a.state === "active" ? "border border-white/5 bg-white/8" : ""}`}>
                {a.icon}
                {a.state && <span className={`absolute bottom-0 h-[3px] rounded-full ${a.state === "active" ? "w-4 bg-[#94c9c1]" : "w-1.5 bg-[#8fa5a3]"}`} />}
              </div>
            ))}
          </div>
        </div>
        <div className="flex w-[281px] items-center pl-[20px] text-white">
          <svg viewBox="0 0 12 7" className="h-[7px] w-3" fill="none" stroke="currentColor" strokeWidth="1.700"><path d="M1 6l5-5 5 5" /></svg>
          <svg viewBox="0 0 18 18" className="ml-[17px] size-[18px]" fill="none" stroke="currentColor" strokeWidth="1.300">
            <path d="M2 8a7 7 0 0 1 13-3.500M15.500 1v4h-4M7 15.800A7 7 0 0 1 3 12.500M2 16.500v-4h4" />
            <circle cx="13.500" cy="13" r="4.200" fill="#ff9800" stroke="none" />
          </svg>
          <span className="ml-5 w-[17px] text-[11.300px]">VIE</span>
          <svg viewBox="0 0 18 14" className="ml-[21px] h-[14px] w-[18px]" fill="none" stroke="currentColor" strokeWidth="1.400">
            <path d="M1.500 5.500a10.500 10.500 0 0 1 15 0M4 8a7 7 0 0 1 10 0M6.300 10.300a3.800 3.800 0 0 1 5.400 0" /><circle cx="9" cy="12" r="1.300" fill="currentColor" stroke="none" />
          </svg>
          <svg viewBox="0 0 18 14" className="ml-[6px] h-[14px] w-[18px]" fill="none" stroke="currentColor" strokeWidth="1.200">
            <path d="M1 5h2.500L7 1.800v10.400L3.500 9H1zM9.500 5a3.200 3.200 0 0 1 0 4M12 3a6 6 0 0 1 0 8M14.500 1.200a9 9 0 0 1 0 11.600" />
          </svg>
          <svg viewBox="0 0 18 14" className="ml-[6px] h-[14px] w-[18px]">
            <path d="M3.500 8v3.500a1 1 0 0 0 1 1h9.500a1 1 0 0 0 1-1v-7a1 1 0 0 0-1-1H8" fill="none" stroke="#fff" strokeWidth="1.400" />
            <path d="M5.500 10.500v-3l3-2h5v5z" fill="#fff" /><path d="M4.500 0L1 5h2.200L2.500 9 6.500 4H4.200l1.500-4z" fill="#fff" /><path d="M16 6.500h1v3h-1z" fill="#fff" stroke="#fff" />
          </svg>
          <div className="ml-auto pr-[19px] text-right text-[11.400px] leading-4">
            <div>4:58 PM</div>
            <div>6/25/2025</div>
          </div>
        </div>
      </div>
      <span className="absolute top-[24px] left-[1757px] font-['Liberation_Sans',sans-serif] text-[13px] leading-4 tracking-[0.250px] whitespace-nowrap text-white/25 italic">recorded by mohesho.com</span>
    </footer>
  );
}

export default function App() {
  return (
    <div className="flex h-[1080px] w-[1920px] flex-col overflow-hidden font-['Noto_Sans','Noto_Sans_CJK_SC',sans-serif]">
      <TabStrip />
      <Toolbar />
      <div className="flex min-h-0 flex-1 overflow-hidden font-['Noto_Sans_CJK_JP',sans-serif]">
        <Sidebar />
        <Main />
      </div>
      <Taskbar />
    </div>
  );
}
